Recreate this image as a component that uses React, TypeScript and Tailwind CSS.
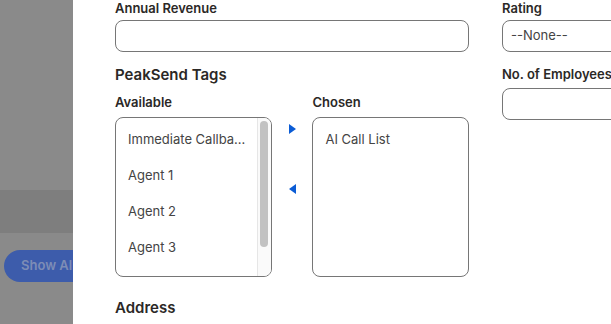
import React from "react";

const availableTags = ["Immediate Callba...", "Agent 1", "Agent 2", "Agent 3"];
const chosenTags = ["AI Call List"];

const Label = ({ children, className = "" }: { children: React.ReactNode; className?: string }) => (
  <div className={`text-[13px] leading-4 font-semibold text-[#2b2826] whitespace-nowrap ${className}`}>
    {children}
  </div>
);

const App: React.FC = () => {
  return (
    <div
      className="w-[611px] h-[324px] overflow-hidden flex bg-white"
      style={{ fontFamily: "Inter, 'Open Sans', sans-serif" }}
    >
      {/* BACKDROP */}
      <div className="w-[73px] shrink-0 flex flex-col bg-[#8a8a8a]">
        <div className="h-[190px]" />
        <div className="h-[43px] bg-[#7e7e7e]" />
        <div className="pt-[17px] pl-[4px]">
          <div className="h-[32px] w-[90px] rounded-l-full bg-[#3d5cab] flex items-center pl-[17px] text-[13px] font-semibold text-[#7d8db6] whitespace-nowrap">
            Show All
          </div>
        </div>
      </div>

      {/* PANEL */}
      <div className="flex-1 flex pl-[42px] relative z-10 bg-white">

        {/* LEFT COLUMN */}
        <div className="w-[354px] shrink-0 flex flex-col">
          <Label>Annual Revenue</Label>
          <div className="mt-[4px] h-[32px] border border-[#767676] rounded-lg" />

          <div className="mt-[13px] text-[15px] leading-5 font-semibold text-[#2b2826]">PeakSend Tags</div>

          <div className="mt-[9px] flex">
            <div className="w-[157px]">
              <Label>Available</Label>
              <div className="mt-[7px] h-[160px] border border-[#767676] rounded-lg flex overflow-hidden">
                <div className="flex-1 pt-[4px] pl-[12px]">
                  {availableTags.map((t) => (
                    <div key={t} className="h-[36px] flex items-center text-[13px] text-[#444] whitespace-nowrap">
                      {t}
                    </div>
                  ))}
                </div>
                <div className="w-[14px] border-l border-[#e6e6e6] bg-[#fafafa] pt-[3px] flex justify-center">
                  <div className="w-[8px] h-[126px] rounded-full bg-[#c2c2c2]" />
                </div>
              </div>
            </div>

            <div className="w-[41px] pt-[30px] flex flex-col items-center">
              <div className="w-0 h-0 border-y-[5px] border-y-transparent border-l-[7px] border-l-[#0b5cd5] ml-[1px]" />
              <div className="mt-[50px] w-0 h-0 border-y-[5px] border-y-transparent border-r-[7px] border-r-[#0b5cd5] ml-[1px]" />
            </div>

            <div className="w-[157px]">
              <Label>Chosen</Label>
              <div className="mt-[7px] h-[160px] border border-[#767676] rounded-lg pt-[4px] pl-[12px]">
                {chosenTags.map((t) => (
                  <div key={t} className="h-[36px] flex items-center text-[13px] text-[#444]">
                    {t}
                  </div>
                ))}
              </div>
            </div>
          </div>

          <div className="mt-[21px] text-[15px] leading-5 font-semibold text-[#2b2826]">Address</div>
        </div>

        {/* RIGHT COLUMN */}
        <div className="ml-[33px] w-[160px] shrink-0 flex flex-col">
          <Label>Rating</Label>
          <div className="mt-[4px] h-[32px] border border-[#767676] rounded-lg flex items-center pl-[8px] text-[13px] text-[#444]">
            --None--
          </div>
          <Label className="mt-[14px]">No. of Employees</Label>
          <div className="mt-[6px] h-[32px] border border-[#767676] rounded-lg" />
        </div>
      </div>
    </div>
  );
};

export default App;
